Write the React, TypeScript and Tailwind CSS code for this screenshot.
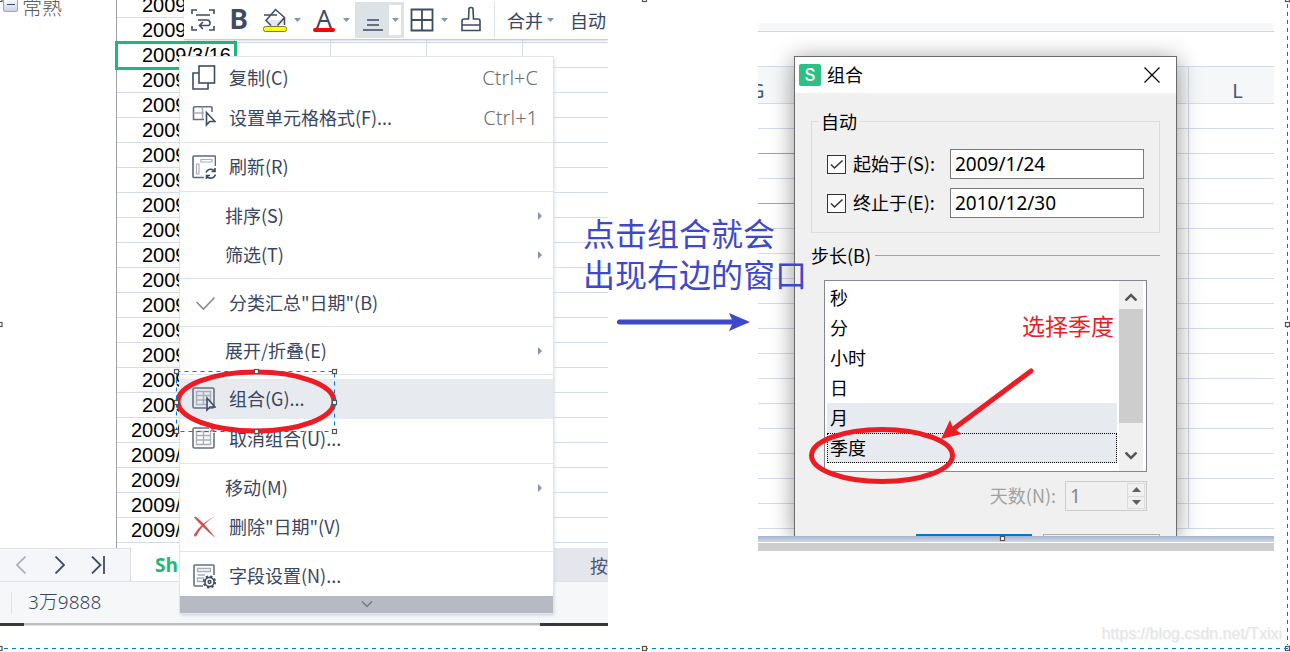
import { clsx } from "clsx";
import { useState } from "react";
import type { ReactNode } from "react";

type MenuEntry =
  | { type: "separator" }
  | {
      type: "item";
      label: string;
      icon?: ReactNode;
      shortcut?: string;
      submenu?: boolean;
      compact?: boolean;
      active?: boolean;
    };

const dates = [
  "2009",
  "2009",
  "2009/3/16",
  ...Array.from({ length: 14 }, () => "2009"),
  ...Array.from({ length: 5 }, () => "2009/"),
];

const steps = ["秒", "分", "小时", "日", "月", "季度"];

/* ========== Icons ========== */

const CopyIcon = () => (
  <svg viewBox="0 0 24 26" className="h-[26px] w-6" fill="none" stroke="#3f4a63" strokeWidth="1.6">
    <path d="M7 8H1v16h15v-6" />
    <rect x="7" y="1" width="15.500" height="17" />
  </svg>
);

const FormatCellsIcon = () => (
  <svg viewBox="0 0 24 24" className="size-6" fill="none" stroke="#667085" strokeWidth="1.6">
    <path d="M12 13.500H1.500V1.500Q1.500 0.800 2.500 0.800H19q1 0 1 1V6" />
    <path d="M1.500 7H12M10.500 1v12" stroke="#a7adba" />
    <path d="M14.500 6.500v12.500l3.200-3.500H23z" stroke="#3f4a63" />
  </svg>
);

const RefreshIcon = () => (
  <svg viewBox="0 0 24 24" className="size-6" fill="none" stroke="#5d6880" strokeWidth="1.6">
    <path d="M12 22.500H2q-1 0-1-1V2q0-1 1-1h20.500q1 0 1 1v9" />
    <path d="M9 4.500h11v2.500H9zM4.500 9h2.500v10H4.500z" stroke="#a7adba" strokeWidth="1.200" />
    <path d="M14 17.500a5 5 0 0 1 8.500-1.500M23 13v3.500h-3.500M23.500 19.500a5 5 0 0 1-8.500 2M14.500 24v-3.500H18" stroke="#3f4a63" />
  </svg>
);

const CheckIcon = () => (
  <svg viewBox="0 0 24 24" className="size-6" fill="none" stroke="#8b8b8b" strokeWidth="1.6">
    <path d="M4.500 11l7 7L22.500 6.500" />
  </svg>
);

const TableGlyph = () => (
  <>
    <rect x="1" y="2" width="21" height="20" rx="1.500" stroke="#667085" strokeWidth="1.6" />
    <path d="M4.500 5.500h14v13h-14zM4.500 9.500h14M4.500 14h14M11.500 5.500v13" stroke="#a7adba" strokeWidth="1.400" />
  </>
);

const GroupIcon = () => (
  <svg viewBox="0 0 24 26" className="h-[26px] w-6" fill="none">
    <TableGlyph />
    <path d="M15 12v12l3-3h5z" fill="#e7eaef" stroke="#3f4a63" strokeWidth="1.6" />
  </svg>
);

const UngroupIcon = () => (
  <svg viewBox="0 0 24 26" className="h-[26px] w-6" fill="none">
    <TableGlyph />
    <path d="M17 0h7v7h-7z" fill="#fff" />
    <path d="M18 1l5 5M23 1l-5 5" stroke="#e0585b" strokeWidth="1.400" />
  </svg>
);

const DeleteIcon = () => (
  <svg viewBox="0 0 24 24" className="size-6" fill="#d25555">
    <path d="M2 2.500Q3 1 5 2.500Q14 10 23.500 23Q11 13 2 2.500z" />
    <path d="M23.500 1Q12 7 4 21.500Q1.500 22 2 19.500Q10 7 23.500 1z" />
  </svg>
);

const FieldSettingsIcon = () => (
  <svg viewBox="0 0 24 26" className="h-[26px] w-6" fill="none" stroke="#667085" strokeWidth="1.6">
    <path d="M11 23H3q-1 0-1-1V3q0-1 1-1h18q1 0 1 1v9" />
    <path d="M5.500 5.500h13v3h-13zM5.500 12h7.500M5.500 15h6v3.500h-6z" stroke="#a7adba" strokeWidth="1.300" />
    <circle cx="17.500" cy="19" r="4.600" stroke="#3f4a63" />
    <circle cx="17.500" cy="19" r="5.700" stroke="#3f4a63" strokeWidth="1.800" strokeDasharray="2.240 2.240" />
    <circle cx="17.500" cy="19" r="1.400" stroke="#3f4a63" strokeWidth="1.500" />
  </svg>
);

const Caret = () => (
  <svg viewBox="0 0 7 4" className="h-1 w-[7px] shrink-0" fill="#8792ad">
    <path d="M0 0h7L3.500 4z" />
  </svg>
);

const WrapTextIcon = () => (
  <svg viewBox="0 0 24 24" className="size-6" fill="none" stroke="#3f4a63" strokeWidth="1.6">
    <path d="M1 6V2h5M18 2h5v4M1 18v4h5M18 22h5v-4" />
    <path d="M5 7h14M7 12h9q3 0 3 3t-3 2.500H9M12 14l-3.500 3.500L12 21" />
  </svg>
);

const FillIcon = () => (
  <svg viewBox="0 0 24 24" className="size-6" fill="none">
    <path d="M3 12h19v2l-7 4H8z" fill="#e4e6eb" />
    <path d="M1 7h13M8 17.500L3 12.500 12.500 1.500l9 8-7 8M21.500 10v7" stroke="#3f4a63" strokeWidth="1.500" />
    <rect x="0.500" y="18.500" width="23" height="5" rx="2" fill="#ff0" stroke="#77773c" />
  </svg>
);

const BordersIcon = () => (
  <svg viewBox="0 0 24 24" className="size-6" fill="none" stroke="#3f4a63" strokeWidth="1.8">
    <path d="M1.500 1.500h21v21h-21zM12 1.500v21M1.500 12h21" />
  </svg>
);

const BrushIcon = () => (
  <svg viewBox="0 0 20 26" className="h-[26px] w-5" fill="none" stroke="#3f4a63" strokeWidth="1.6">
    <path d="M7.500 13L8 3q0-1.500 2-1.500T12 3l.500 10H17q2 0 2 2v9.500H1V15q0-2 2-2zM1 19h18" />
  </svg>
);

const Handle = ({ x, y }: { x: number; y: number }) => (
  <rect x={x - 2} y={y - 2} width="4" height="4" fill="#fff" stroke="#555" strokeWidth="1.200" />
);

/* ========== Spreadsheet with context menu ========== */

const menu: MenuEntry[] = [
  { type: "item", label: "复制(C)", icon: <CopyIcon />, shortcut: "Ctrl+C" },
  { type: "item", label: "设置单元格格式(F)...", icon: <FormatCellsIcon />, shortcut: "Ctrl+1" },
  { type: "separator" },
  { type: "item", label: "刷新(R)", icon: <RefreshIcon /> },
  { type: "separator" },
  { type: "item", label: "排序(S)", submenu: true, compact: true },
  { type: "item", label: "筛选(T)", submenu: true, compact: true },
  { type: "separator" },
  { type: "item", label: '分类汇总"日期"(B)', icon: <CheckIcon />, compact: true },
  { type: "separator" },
  { type: "item", label: "展开/折叠(E)", submenu: true, compact: true },
  { type: "separator" },
  { type: "item", label: "组合(G)...", icon: <GroupIcon />, active: true },
  { type: "item", label: "取消组合(U)...", icon: <UngroupIcon /> },
  { type: "separator" },
  { type: "item", label: "移动(M)", submenu: true, compact: true },
  { type: "item", label: '删除"日期"(V)', icon: <DeleteIcon /> },
  { type: "separator" },
  { type: "item", label: "字段设置(N)...", icon: <FieldSettingsIcon /> },
];

const Toolbar = () => (
  <div className="absolute top-0 right-0 left-[184px] flex h-10 items-center overflow-hidden border-b border-[#c9ccc9] bg-white pt-px pl-[7px] whitespace-nowrap shadow-sm">
    <button aria-label="自动换行">
      <WrapTextIcon />
    </button>
    <button className="ml-[14px] w-5 font-['Roboto'] text-[28px] leading-9 font-bold text-[#3f4a63]">B</button>
    <button aria-label="填充颜色" className="ml-[14px] flex items-center gap-[7px]">
      <FillIcon />
      <Caret />
    </button>
    <button className="ml-3 flex items-center gap-2">
      <span className="flex w-[22px] flex-col items-center">
        <span className="font-['Noto_Sans'] text-[25px] leading-5 text-[#3f4a63]">A</span>
        <span className="h-1 w-full rounded-full bg-[#ff0000]" />
      </span>
      <Caret />
    </button>
    <button
      aria-label="对齐"
      className="ml-[5px] flex h-9 w-[49px] shrink-0 items-center justify-between bg-[#dde2e7] pr-[3px] pl-2"
    >
      <svg viewBox="0 0 20 24" className="h-6 w-5" fill="none" stroke="#3f4a63" strokeWidth="1.5">
        <path d="M4 12h12M4 17h12M0 22h20" />
      </svg>
      <span className="flex h-[30px] w-3 items-center justify-center bg-white">
        <Caret />
      </span>
    </button>
    <button aria-label="边框" className="ml-[6px] flex items-center gap-[7px]">
      <BordersIcon />
      <Caret />
    </button>
    <button aria-label="格式刷" className="ml-[13px] shrink-0 pb-[2px]">
      <BrushIcon />
    </button>
    <span className="ml-[13px] h-9 w-px shrink-0 bg-[#e0e2e8]" />
    <button className="ml-3 flex items-center gap-1 text-[#3a4560]">
      合并
      <Caret />
    </button>
    <button className="ml-4 text-[#3a4560]">自动</button>
  </div>
);

const ContextMenu = () => (
  <div className="absolute top-[57px] left-[180px] w-[373px] bg-white pt-px text-[#3a4560] shadow-[0_0_0_1px_#dfe4ee,1px_2px_3px_#c9cfdd]">
    <div role="menu">
      {menu.map((entry, i) =>
        entry.type === "separator" ? (
          <div key={i} role="separator" className="my-1 h-px bg-[#e1e4e8]" />
        ) : (
          <button
            key={i}
            role="menuitem"
            className={clsx(
              "flex w-full items-center pr-[11px] text-left",
              entry.compact ? "h-[39px]" : "h-10",
              entry.icon ? "gap-[13px] pl-3" : "pl-[45px]",
              entry.active && "bg-[#e7eaef]",
            )}
          >
            {entry.icon}
            <span className="flex-1 pb-[2px]">{entry.label}</span>
            {entry.shortcut && (
              <span className="pr-1 font-['Noto_Sans'] text-[20px] font-light text-[#6c6e74]">{entry.shortcut}</span>
            )}
            {entry.submenu && (
              <svg viewBox="0 0 4 8" className="h-2 w-1" fill="#8792ad">
                <path d="M0 0l4 4-4 4z" />
              </svg>
            )}
          </button>
        ),
      )}
    </div>
    <button aria-label="更多" className="flex h-[17px] w-full items-center justify-center bg-[#b7bac2]">
      <svg viewBox="0 0 12 7" className="h-[7px] w-3" fill="none" stroke="#767a82" strokeWidth="1.500">
        <path d="M1 0.500l5 5 5-5" />
      </svg>
    </button>

    {/* Marked entry */}
    <svg viewBox="0 0 166 70" className="pointer-events-none absolute top-[310px] -left-2 h-[70px] w-[166px]" fill="none">
      <ellipse cx="84" cy="34.500" rx="78" ry="29.500" stroke="#ed1c24" strokeWidth="5" />
      <rect x="4.500" y="4.500" width="158" height="60" stroke="#0078d7" strokeDasharray="4 4" />
      {[4.5, 84.5, 162.5].map((x) => (
        <g key={x}>
          <Handle x={x} y={4.5} />
          <Handle x={x} y={64.5} />
        </g>
      ))}
      <Handle x={4.5} y={35.5} />
      <Handle x={162.5} y={35.5} />
    </svg>
  </div>
);

const Sheet = () => (
  <section className="relative flex-[608] basis-0 self-start overflow-hidden">
    <div className="flex overflow-hidden">
      <div className="flex w-[116px] shrink-0 items-start pl-[3px] text-[#595959]">
        <button
          aria-label="折叠"
          className="-mt-[3px] flex size-[15px] items-center justify-center rounded-xs border border-[#9ba4b5] bg-linear-to-b from-white to-[#ccd2e0]"
        >
          <span className="h-px w-2 bg-[#3b4a75]" />
        </button>
        <span className="-mt-[3px] ml-1 text-[20px] leading-5 font-light">常熟</span>
      </div>
      <div className="flex-1 border-l border-[#a0a0a0] pb-[5px]">
        <table className="-mt-[7px] w-full table-fixed border-separate border-spacing-0 font-['Liberation_Sans'] text-[20px] leading-6 text-black">
          <colgroup>
            <col className="w-[118px]" />
            <col className="w-24" />
            <col className="w-24" />
            <col className="w-24" />
            <col />
          </colgroup>
          <tbody>
            {dates.map((date, i) => (
              <tr key={i}>
                <td
                  className={clsx(
                    "h-[25px] overflow-hidden border-r border-b border-[#d4dbea] p-0 whitespace-nowrap",
                    date === "2009/" ? "pl-[14px]" : "pl-[25px]",
                    date === "2009/3/16" && "outline-3 -outline-offset-1 outline-[#21b777]",
                  )}
                >
                  {date}
                </td>
                <td className="border-r border-b border-[#d4dbea] p-0" />
                <td className="border-r border-b border-[#d4dbea] p-0" />
                <td className="border-r border-b border-[#d4dbea] p-0" />
                <td className="border-b border-[#d4dbea] p-0" />
              </tr>
            ))}
          </tbody>
        </table>
      </div>
    </div>

    <div className="flex h-[34px] border-b border-[#dfe1e8] bg-white">
      <div className="flex w-[131px] shrink-0 items-center gap-[26px] border-t border-r border-[#dfe1e8] bg-[#f5f6f9] pl-4">
        <button aria-label="上一个">
          <svg viewBox="0 0 10 18" className="h-[18px] w-[10px]" fill="none" stroke="#a9adb5" strokeWidth="1.600">
            <path d="M9.500 0.500L1 9l8.500 8.500" />
          </svg>
        </button>
        <button aria-label="下一个" className="ml-[3px]">
          <svg viewBox="0 0 10 18" className="h-[18px] w-[10px]" fill="none" stroke="#3f4a63" strokeWidth="1.800">
            <path d="M0.500 0.500L9 9l-8.500 8.500" />
          </svg>
        </button>
        <button aria-label="最后一个">
          <svg viewBox="0 0 16 18" className="h-[18px] w-4" fill="none" stroke="#3f4a63" strokeWidth="1.800">
            <path d="M1 0.500L9.500 9 1 17.500M13 0v18" />
          </svg>
        </button>
      </div>
      <button className="pl-6 font-['Open_Sans'] text-[19px] font-bold text-[#21b777]">She</button>
      <button className="ml-auto w-[60px] overflow-hidden bg-[#e5e6ec] pl-[42px] text-left whitespace-nowrap text-[#4a5578]">
        按
      </button>
    </div>
    <div className="flex h-[41px] items-center bg-[#f5f7f9] pl-[11px] text-[#3a4560]">
      <span className="h-[22px] w-px bg-[#dfe1e8]" />
      <span className="pb-[2px] pl-4 font-['Noto_Sans','Noto_Sans_CJK_SC',sans-serif] text-[19px] font-light">
        3万9888
      </span>
    </div>
    <div className="flex h-[3px]">
      <span className="w-6 bg-[#38393f]" />
      <span className="flex-1 border-b border-[#e2e2e2] bg-[#bdbdbd]" />
      <span className="w-[68px] bg-[#37353c]" />
    </div>

    <Toolbar />
    <ContextMenu />
  </section>
);

/* ========== Grouping dialog ========== */

type DateFieldProps = {
  id: string;
  label: string;
  defaultValue: string;
};

const DateField = ({ id, label, defaultValue }: DateFieldProps) => {
  const [checked, setChecked] = useState(true);

  return (
    <div className="flex items-center">
      <span className="relative flex size-[19px] shrink-0">
        <input
          id={`${id}-enabled`}
          type="checkbox"
          checked={checked}
          onChange={() => setChecked(!checked)}
          className="size-[19px] appearance-none border border-[#333] bg-white"
        />
        {checked && (
          <svg
            viewBox="0 0 19 19"
            className="pointer-events-none absolute inset-0 size-[19px]"
            fill="none"
            stroke="#333"
            strokeWidth="1.600"
          >
            <path d="M4 9.500l3.500 3.500L15.500 5.500" />
          </svg>
        )}
      </span>
      <label htmlFor={`${id}-enabled`} className="w-[96px] shrink-0 pb-[2px] pl-[7px] whitespace-nowrap">
        {label}
      </label>
      <input
        aria-label={label}
        defaultValue={defaultValue}
        className="ml-2 h-[30px] min-w-0 flex-1 rounded-none border border-[#7a7a7a] bg-white px-1 font-['Noto_Sans'] text-[19px] outline-none"
      />
    </div>
  );
};

const StepList = () => {
  const [selected, setSelected] = useState(["月", "季度"]);

  const handleToggle = (step: string) => {
    setSelected((prev) => (prev.includes(step) ? prev.filter((s) => s !== step) : [...prev, step]));
  };

  return (
    <div className="mt-[13px] mr-[13px] ml-[13px] flex border border-[#828790] bg-white">
      <ul role="listbox" aria-label="步长(B)" aria-multiselectable className="flex-1 pt-[2px] pr-[2px] pb-2 pl-[2px]">
        {steps.map((step) => (
          <li
            key={step}
            role="option"
            aria-selected={selected.includes(step)}
            onClick={() => handleToggle(step)}
            className={clsx(
              "h-[30px] border pl-[2px] leading-[26px]",
              selected.includes(step) && "bg-[#e7eaef]",
              step === "季度" ? "border-dotted border-black" : "border-transparent",
            )}
          >
            {step}
          </li>
        ))}
      </ul>
      <div className="mr-[3px] flex w-6 flex-col bg-[#f0f0f0]">
        <button aria-label="向上" className="flex h-7 items-center justify-center pt-1">
          <svg viewBox="0 0 12 8" className="h-2 w-3" fill="none" stroke="#555" strokeWidth="2.500">
            <path d="M0.500 7.500L6 2l5.500 5.500" />
          </svg>
        </button>
        <div className="h-[114px] bg-[#cdcdcd]" />
        <button aria-label="向下" className="mt-auto flex h-[30px] items-center justify-center">
          <svg viewBox="0 0 12 8" className="h-2 w-3" fill="none" stroke="#555" strokeWidth="2.500">
            <path d="M0.500 0.500L6 6l5.500-5.500" />
          </svg>
        </button>
      </div>
    </div>
  );
};

const GroupDialog = () => (
  <div
    role="dialog"
    aria-labelledby="dialog-title"
    className="absolute top-14 right-[97px] bottom-0 left-9 border border-b-0 border-[#6b6b6b] bg-[#f0f0f0] text-black shadow-[0_3px_22px_rgba(0,0,0,0.42)]"
  >
    <header className="flex h-9 items-center bg-white pr-4 pl-1">
      <span className="flex size-[22px] items-center justify-center rounded-xs bg-[#2bc184] font-['Inter'] text-[17px] leading-none font-medium text-white">
        S
      </span>
      <h2 id="dialog-title" className="flex-1 pb-[2px] pl-[6px]">
        组合
      </h2>
      <button aria-label="关闭">
        <svg viewBox="0 0 16 16" className="size-4" fill="none" stroke="#000" strokeWidth="1.200">
          <path d="M0.500 0.500l15 15M15.500 0.500l-15 15" />
        </svg>
      </button>
    </header>

    <div className="px-4 pt-4">
      <fieldset className="flex min-w-0 flex-col gap-[9px] border border-[#dcdcdc] px-[15px] pt-4 pb-[14px]">
        <legend className="-ml-[9px] px-[3px] leading-6">自动</legend>
        <DateField id="start" label="起始于(S):" defaultValue="2009/1/24" />
        <DateField id="end" label="终止于(E):" defaultValue="2010/12/30" />
      </fieldset>

      <div className="mt-[10px] flex items-center gap-1 leading-6">
        <span>步长(B)</span>
        <span className="h-px flex-1 bg-[#a0a0a0]" />
      </div>

      <StepList />

      <div className="mt-[9px] mr-[13px] flex items-center justify-end text-[#a0a0a0]">
        <label htmlFor="days" className="pb-[2px]">
          天数(N):
        </label>
        <span className="ml-[9px] flex h-[30px] w-[82px] border border-[#ccc] p-px">
          <input
            id="days"
            disabled
            defaultValue="1"
            className="min-w-0 flex-1 pl-[3px] font-['Noto_Sans'] text-[19px] text-[#85858d]"
          />
          <span className="flex w-[18px] flex-col border border-[#dcdcdc]">
            <button aria-label="增加" className="flex flex-1 items-center justify-center border-b border-[#dcdcdc]">
              <svg viewBox="0 0 9 5" className="h-[5px] w-[9px]" fill="#606060">
                <path d="M0 5h9L4.500 0z" />
              </svg>
            </button>
            <button aria-label="减少" className="flex flex-1 items-center justify-center">
              <svg viewBox="0 0 9 5" className="h-[5px] w-[9px]" fill="#606060">
                <path d="M0 0h9L4.500 5z" />
              </svg>
            </button>
          </span>
        </span>
      </div>

      <div className="mt-[23px] flex justify-end gap-[11px]">
        <span className="h-[2px] w-[116px] bg-[#0078d7]" />
        <span className="h-[2px] w-[117px] border-x border-t border-[#adadad]" />
      </div>
    </div>

    {/* Hint, arrow and ring over the selected step */}
    <p className="absolute top-[254px] right-[62px] text-[23px] leading-7 text-[#ed1c24]">选择季度</p>
    <svg
      viewBox="0 0 230 120"
      className="pointer-events-none absolute top-[309px] left-[10px] h-[120px] w-[230px]"
      fill="none"
      stroke="#ed1c24"
    >
      <ellipse cx="77" cy="89.500" rx="70.500" ry="26" strokeWidth="5" />
      <path d="M226 5L147 64" strokeWidth="5" strokeLinecap="round" />
      <path d="M136 73L145 54L148 62L157 68z" fill="#ed1c24" stroke="none" />
    </svg>
  </div>
);

const DialogSheet = () => (
  <section className="flex-[516] basis-0 self-start">
    <div className="relative overflow-hidden pt-[23px] pb-[7px]">
      <div className="mb-[34px] h-[9px] border-b border-[#d3d6dd] bg-[#f5f7f9]" />
      <table className="w-full table-fixed border-separate border-spacing-0">
        <colgroup>
          <col />
          <col className="w-24" />
          <col className="w-[85px]" />
        </colgroup>
        <thead>
          <tr className="bg-[#f5f7f9] font-['Noto_Sans'] text-[20px] leading-6 text-[#4a5578]">
            <th className="h-[38px] overflow-hidden border-t border-b border-[#d4dbea] p-0 pt-3 text-left font-normal">
              <span className="-ml-2">G</span>
            </th>
            <th className="border-t border-r border-b border-[#d4dbea] p-0" />
            <th className="border-t border-b border-[#d4dbea] p-0 pt-3 pl-3 font-normal">L</th>
          </tr>
        </thead>
        <tbody>
          {Array.from({ length: 17 }, (_, i) => (
            <tr key={i}>
              <td
                className={clsx(
                  "h-[25px] border-b p-0",
                  i === 1 || i === 3 ? "border-b-[#a3a3a3]" : "border-b-[#d4dbea]",
                )}
              />
              <td className="border-r border-b border-r-[#c9d1e4] border-b-[#d4dbea] p-0" />
              <td className="border-b border-[#d4dbea] p-0" />
            </tr>
          ))}
        </tbody>
      </table>
      <GroupDialog />
    </div>
    <div className="h-[6px] bg-linear-to-b from-[#a5b4cc] to-[#d0d8e5]" />
    <div className="mt-px h-2 bg-[#cdcdcd]" />
  </section>
);

/* ========== Page ========== */

const Callout = () => (
  <div className="relative z-10 w-[150px] shrink-0">
    <p className="absolute top-[212px] -left-[25px] text-[32px] leading-[41px] whitespace-nowrap text-[#3f48cc]">
      点击组合就会
      <br />
      出现右边的窗口
    </p>
    <svg viewBox="0 0 140 24" className="absolute top-[310px] left-[5px] h-6 w-[140px]" fill="#3f48cc">
      <path d="M6.500 12H122" stroke="#3f48cc" strokeWidth="5" strokeLinecap="round" />
      <path d="M137 12L116 3l4 9-4 9z" />
    </svg>
  </div>
);

const SelectionFrame = () => (
  <svg className="pointer-events-none absolute inset-0 size-full" fill="none">
    <svg x="100%" className="overflow-visible">
      <path d="M-2.500 4V645" stroke="#0078d7" strokeDasharray="4 4" />
      <Handle x={-2.5} y={-0.5} />
      <Handle x={-2.5} y={324.5} />
      <Handle x={-2.5} y={648.5} />
    </svg>
    <line x1="4" x2="100%" y1="648.500" y2="648.500" stroke="#0078d7" strokeDasharray="4 4" />
    <Handle x={0} y={-0.5} />
    <Handle x={0} y={324.5} />
    <Handle x={0} y={648.5} />
    <svg x="50%" className="overflow-visible">
      <Handle x={-0.5} y={-0.5} />
      <Handle x={-0.5} y={648.5} />
      <Handle x={357.5} y={538.5} />
    </svg>
  </svg>
);

export default function App() {
  return (
    <main className="relative flex min-h-screen overflow-hidden bg-white pr-4 font-['Noto_Sans_CJK_SC',sans-serif] text-[18px] leading-6">
      <Sheet />
      <Callout />
      <DialogSheet />
      <a
        href="https://blog.csdn.net/Txixi"
        className="absolute right-2 bottom-[6px] font-['Liberation_Sans'] text-[16px] text-[#e6e6e6] [text-shadow:1px_1px_0_#f4f4f4]"
      >
        https://blog.csdn.net/Txixi
      </a>
      <SelectionFrame />
    </main>
  );
}
